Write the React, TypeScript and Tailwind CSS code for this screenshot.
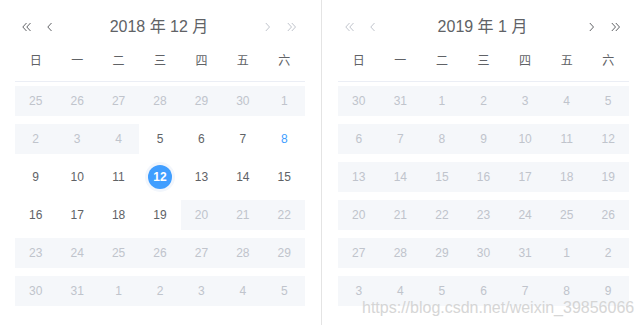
import React from "react";

const font = { fontFamily: '"Liberation Sans", Arial, "Noto Sans CJK SC", sans-serif' };

type Cell = { d: number; kind: "off" | "on" | "today" | "sel" };

function Chev({ dir, dbl, color }: { dir: "l" | "r"; dbl?: boolean; color: string }) {
  const w = dbl ? 10 : 6;
  const one = (x: number) =>
    dir === "l" ? `M${x + 4.5} 1 L${x + 0.8} 5 L${x + 4.5} 9` : `M${x + 0.8} 1 L${x + 4.5} 5 L${x + 0.8} 9`;
  return (
    <svg width={w} height={10} viewBox={`0 0 ${w} 10`} fill="none" stroke={color} strokeWidth={1}>
      <path d={one(0)} />
      {dbl && <path d={one(4)} />}
    </svg>
  );
}

const weekdays = ["日", "一", "二", "三", "四", "五", "六"];

function Panel({
  title,
  rows,
  leftDark,
  className,
}: {
  title: string;
  rows: Cell[][];
  leftDark: boolean;
  className: string;
}) {
  const dark = "#606266";
  const light = "#c0c4cc";
  const lc = leftDark ? dark : light;
  const rc = leftDark ? light : dark;
  return (
    <div className={className}>
      <div className="mt-[12px] h-[30px] flex items-center">
        <div className="ml-[7px] flex items-center">
          <Chev dir="l" dbl color={lc} />
          <div className="ml-[15px]">
            <Chev dir="l" color={lc} />
          </div>
        </div>
        <div className="flex-1 text-center text-[16px] text-[#606266] leading-none">{title}</div>
        <div className="mr-[8px] flex items-center">
          <Chev dir="r" color={rc} />
          <div className="ml-[16px]">
            <Chev dir="r" dbl color={rc} />
          </div>
        </div>
      </div>
      <div className="h-[40px] grid grid-cols-7 border-b border-[#ebeef5] items-center text-[12px] text-[#606266] pb-[1px]">
        {weekdays.map((w) => (
          <div key={w} className="text-center">
            {w}
          </div>
        ))}
      </div>
      <div className="mt-[4px] flex flex-col gap-[8px]">
        {rows.map((r, i) => (
          <div key={i} className="grid grid-cols-7 h-[30px] text-[12px]">
            {r.map((c, j) => {
              if (c.kind === "sel") {
                return (
                  <div key={j} className="flex items-center justify-center">
                    <div className="w-[30px] h-[30px] rounded-full bg-[#f2f6fc] flex items-center justify-center">
                      <div className="w-[24px] h-[24px] rounded-full bg-[#409eff] text-white font-bold flex items-center justify-center">
                        {c.d}
                      </div>
                    </div>
                  </div>
                );
              }
              const cls =
                c.kind === "off"
                  ? "bg-[#f5f7fa] text-[#c0c4cc]"
                  : c.kind === "today"
                  ? "text-[#409eff]"
                  : "text-[#606266]";
              return (
                <div key={j} className={`flex items-center justify-center ${cls}`}>
                  {c.d}
                </div>
              );
            })}
          </div>
        ))}
      </div>
    </div>
  );
}

function mk(nums: number[], kinds: (i: number) => Cell["kind"]): Cell[][] {
  const out: Cell[][] = [];
  for (let r = 0; r < 6; r++) {
    out.push(nums.slice(r * 7, r * 7 + 7).map((d, j) => ({ d, kind: kinds(r * 7 + j) })));
  }
  return out;
}

export default function App() {
  const decNums = [
    25, 26, 27, 28, 29, 30, 1, 2, 3, 4, 5, 6, 7, 8, 9, 10, 11, 12, 13, 14, 15, 16, 17, 18, 19, 20, 21, 22, 23, 24, 25,
    26, 27, 28, 29, 30, 31, 1, 2, 3, 4, 5,
  ];
  const dec = mk(decNums, (i) => {
    if (i < 10) return "off";
    if (i >= 25) return "off";
    if (i === 13) return "today";
    if (i === 17) return "sel";
    return "on";
  });
  const janNums = [
    30, 31, 1, 2, 3, 4, 5, 6, 7, 8, 9, 10, 11, 12, 13, 14, 15, 16, 17, 18, 19, 20, 21, 22, 23, 24, 25, 26, 27, 28, 29,
    30, 31, 1, 2, 3, 4, 5, 6, 7, 8, 9,
  ];
  const jan = mk(janNums, () => "off");
  return (
    <div className="relative w-[642px] h-[325px] bg-white flex overflow-hidden" style={font}>
      <Panel
        title="2018 年 12 月"
        rows={dec}
        leftDark
        className="w-[322px] h-full border-r border-[#e4e4e4] pl-[15px] pr-[16px]"
      />
      <Panel title="2019 年 1 月" rows={jan} leftDark={false} className="flex-1 h-full pl-[16px] pr-[13px]" />
      <div className="absolute left-[362px] top-[298px] text-[16px] text-[#d2d2d2] leading-[20px] opacity-90">
        https://blog.csdn.net/weixin_39856066
      </div>
    </div>
  );
}
